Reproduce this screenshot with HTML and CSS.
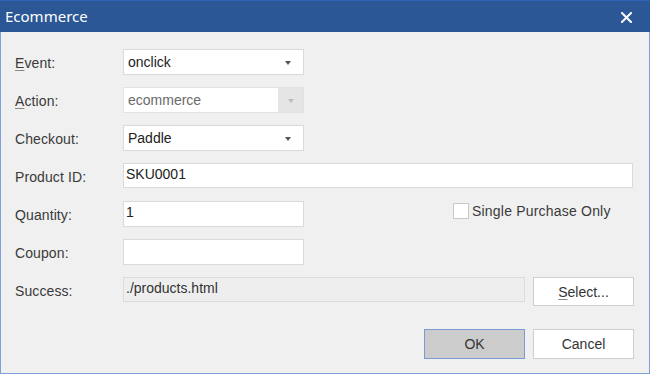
FILE: index.html
```html
<!DOCTYPE html>
<html>
<head>
<meta charset="utf-8">
<link rel="stylesheet" href="styles.css">
</head>
<body>
<div class="dialog">
  <div class="titlebar">
    <span class="title">Ecommerce</span>
    <svg class="close" width="11" height="11" viewBox="0 0 11 11"><path d="M1 1L10 10M10 1L1 10" stroke="#fff" stroke-width="2" stroke-linecap="square"/></svg>
  </div>
  <div class="body">
    <div class="form">
      <label class="lbl"><u>E</u>vent:</label>
      <div class="field"><div class="combo"><span class="val">onclick</span><span class="arrow"></span></div></div>

      <label class="lbl"><u>A</u>ction:</label>
      <div class="field"><div class="combo disabled"><span class="val">ecommerce</span><span class="arrow-box"><span class="arrow"></span></span></div></div>

      <label class="lbl">Checkout:</label>
      <div class="field"><div class="combo"><span class="val">Paddle</span><span class="arrow"></span></div></div>

      <label class="lbl">Product ID:</label>
      <div class="field"><div class="text wide">SKU0001</div></div>

      <label class="lbl">Quantity:</label>
      <div class="field"><div class="text">1</div>
        <div class="check"><span class="box"></span><span class="check-text">Single Purchase Only</span></div>
      </div>

      <label class="lbl">Coupon:</label>
      <div class="field"><div class="text"></div></div>

      <label class="lbl">Success:</label>
      <div class="field"><div class="text ro">./products.html</div><button class="btn select"><u>S</u>elect...</button></div>
    </div>
    <div class="actions">
      <button class="btn ok">OK</button>
      <button class="btn">Cancel</button>
    </div>
  </div>
</div>
</body>
</html>
```

FILE: styles.css
```css
* { box-sizing: border-box; }
html, body { margin: 0; padding: 0; }
body {
  width: 650px;
  height: 374px;
  background: #f0f0f0;
  font-family: "Liberation Sans", Arial, sans-serif;
  font-size: 14px;
  color: #333;
  overflow: hidden;
}
.dialog {
  width: 650px;
  height: 374px;
  border: 1px solid #7f9fd8;
  border-top: none;
  display: flex;
  flex-direction: column;
}
.titlebar {
  height: 32px;
  margin: 0 -1px;
  background: #2b5797;
  border-top: 1px solid #2f63b8;
  display: flex;
  align-items: center;
  justify-content: space-between;
  padding: 0 18px 0 5px;
}
.title {
  font-family: "Noto Sans", "Open Sans", sans-serif;
  font-size: 15px;
  color: #fff;
  line-height: 20px;
  margin-top: -1px;
}
.close { display: block; margin-top: 1px; }
.body {
  flex: 1;
  padding: 17px 15px 14px 14px;
  display: flex;
  flex-direction: column;
}
.form {
  display: grid;
  grid-template-columns: 108px 1fr;
  grid-auto-rows: 26px;
  row-gap: 12px;
}
.lbl {
  display: flex;
  align-items: center;
  color: #3a3a3a;
  padding-top: 1px;
  letter-spacing: 0.1px;
}
.lbl u { text-decoration-thickness: 1px; text-underline-offset: 2px; text-decoration-color: #888; }
.field {
  display: flex;
  align-items: flex-start;
}
.combo {
  width: 181px;
  height: 26px;
  background: #fff;
  border: 1px solid #dadada;
  display: flex;
  align-items: center;
  justify-content: space-between;
  padding: 0 12px 0 4px;
  color: #222;
}
.arrow {
  width: 0;
  height: 0;
  border-left: 3.5px solid transparent;
  border-right: 3.5px solid transparent;
  border-top: 4px solid #555;
  margin-top: 1px;
}
.combo.disabled {
  color: #6a6a6a;
  border-color: #e2e2e2;
  padding-right: 0;
  align-items: stretch;
}
.combo.disabled .val { display: flex; align-items: center; }
.arrow-box {
  width: 25px;
  background: #e5e5e5;
  display: flex;
  align-items: center;
  justify-content: center;
}
.arrow-box .arrow { border-top-color: #bdbdbd; }
.text {
  width: 181px;
  height: 26px;
  background: #fff;
  border: 1px solid #dadada;
  padding: 2px 2px;
  line-height: 16px;
  color: #222;
}
.text.wide { width: 510px; height: 25px; }
.text.ro {
  width: 402px;
  height: 25px;
  background: #eeeeee;
  border-color: #dcdcdc;
  color: #333;
}
.check {
  display: flex;
  align-items: center;
  margin-left: 149px;
  margin-top: 2px;
  color: #3a3a3a;
}
.check-text { letter-spacing: 0.2px; }
.box {
  width: 16px;
  height: 16px;
  background: #fff;
  border: 1px solid #c8c8c8;
  margin-right: 3px;
}
.btn {
  width: 101px;
  height: 30px;
  background: #fff;
  border: 1px solid #cfcfcf;
  font-family: "Liberation Sans", Arial, sans-serif;
  font-size: 14px;
  color: #333;
  padding: 0;
}
.btn u { text-decoration-thickness: 1px; text-underline-offset: 2px; text-decoration-color: #888; }
.select { margin-left: 8px; height: 29px; }
.actions {
  margin-top: auto;
  display: flex;
  justify-content: flex-end;
  gap: 8px;
}
.ok {
  background: #cccccc;
  border-color: #7a9bd6;
}
```
